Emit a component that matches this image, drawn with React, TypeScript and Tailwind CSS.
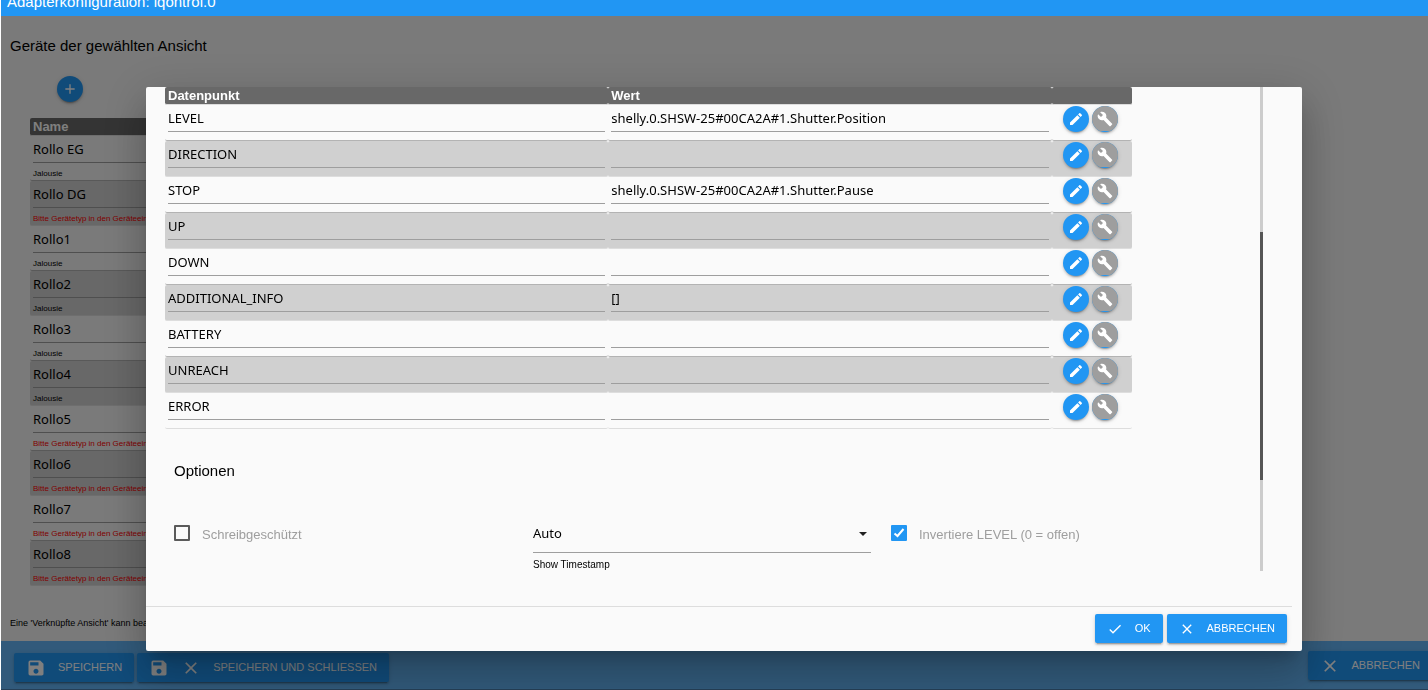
import { useState } from "react";
import type { ReactNode } from "react";
import { MdAdd, MdBuild, MdCheck, MdClose, MdEdit, MdSave } from "react-icons/md";

type Device = {
  name: string;
  type?: string;
};

type State = {
  name: string;
  value: string;
};

const devices: Device[] = [
  { name: "Rollo EG", type: "Jalousie" },
  { name: "Rollo DG" },
  { name: "Rollo1", type: "Jalousie" },
  { name: "Rollo2", type: "Jalousie" },
  { name: "Rollo3", type: "Jalousie" },
  { name: "Rollo4", type: "Jalousie" },
  { name: "Rollo5" },
  { name: "Rollo6" },
  { name: "Rollo7" },
  { name: "Rollo8" },
];

const initialStates: State[] = [
  { name: "LEVEL", value: "shelly.0.SHSW-25#00CA2A#1.Shutter.Position" },
  { name: "DIRECTION", value: "" },
  { name: "STOP", value: "shelly.0.SHSW-25#00CA2A#1.Shutter.Pause" },
  { name: "UP", value: "" },
  { name: "DOWN", value: "" },
  { name: "ADDITIONAL_INFO", value: "[]" },
  { name: "BATTERY", value: "" },
  { name: "UNREACH", value: "" },
  { name: "ERROR", value: "" },
];

const inputClass =
  "block w-full border-b border-[#9e9e9e] bg-transparent font-['Noto_Sans',sans-serif] text-[13px] text-black outline-none";

const headClass = "rounded-xs border-b border-[#ddd] bg-[#686868] px-[3px] py-0 font-bold";

// Striped rows, the line above a grey row is darker than the one below it
const stripeClass =
  "*:rounded-xs *:border-b *:border-[#ddd] *:align-top not-last:odd:*:border-[#b3b3b3] even:*:bg-[#d0d0d0]";

function ActionButton({ children }: { children: ReactNode }) {
  return (
    <button
      type="button"
      className="flex h-[29px] shrink-0 items-center gap-3 rounded-xs bg-[#2196f3] px-3 text-[11px] whitespace-nowrap text-white uppercase shadow-[0_2px_2px_rgba(0,0,0,0.14),0_1px_5px_rgba(0,0,0,0.12),0_3px_1px_-2px_rgba(0,0,0,0.2)]"
    >
      {children}
    </button>
  );
}

function DeviceTable() {
  return (
    <table className="w-full table-fixed border-separate border-spacing-0 text-left">
      <thead>
        <tr className="h-[18px] text-[13px] leading-[17px] text-white">
          <th className={headClass}>Name</th>
        </tr>
      </thead>
      <tbody>
        {devices.map((device) => (
          <tr key={device.name} className={`h-[45px] ${stripeClass}`}>
            <td className="px-[3px] py-0">
              <input aria-label="Name" defaultValue={device.name} className={`${inputClass} h-[27px]`} />
              <p
                className={
                  device.type
                    ? "pt-1 text-[8px] leading-[13px] text-black"
                    : "pt-1 text-[8px] leading-[13px] text-[#ff0000]"
                }
              >
                {device.type ?? "Bitte Gerätetyp in den Geräteeinstellungen wählen"}
              </p>
            </td>
          </tr>
        ))}
      </tbody>
    </table>
  );
}

function StateTable() {
  const [states, setStates] = useState(initialStates);

  const update = (index: number, changes: Partial<State>) => {
    setStates(states.map((state, i) => (i === index ? { ...state, ...changes } : state)));
  };

  return (
    <table className="w-[90%] table-fixed border-separate border-spacing-0 text-left">
      <thead>
        <tr className="h-[18px] text-[13px] leading-[17px] text-white">
          <th className={headClass}>Datenpunkt</th>
          <th className={headClass}>Wert</th>
          <th className={`${headClass} w-20`} />
        </tr>
      </thead>
      <tbody>
        {states.map((state, i) => (
          <tr key={i} className={`h-9 ${stripeClass}`}>
            <td className="px-[3px] py-0">
              <input
                aria-label="Datenpunkt"
                value={state.name}
                onChange={(e) => update(i, { name: e.target.value })}
                className={`${inputClass} h-[27px]`}
              />
            </td>
            <td className="px-[3px] py-0">
              <input
                aria-label="Wert"
                value={state.value}
                onChange={(e) => update(i, { value: e.target.value })}
                className={`${inputClass} h-[27px]`}
              />
            </td>
            <td className="pt-px pr-0 pb-0 pl-[11px]">
              <div className="flex gap-[3px]">
                <button
                  type="button"
                  aria-label="Bearbeiten"
                  className="flex size-[26px] items-center justify-center rounded-full bg-[#2196f3] text-white shadow-[0_2px_2px_rgba(0,0,0,0.14),0_1px_5px_rgba(0,0,0,0.12),0_3px_1px_-2px_rgba(0,0,0,0.2)]"
                >
                  <MdEdit size={16} />
                </button>
                <button
                  type="button"
                  aria-label="Einstellungen"
                  className="flex size-[26px] items-start overflow-hidden rounded-full bg-[#2196f3] text-white shadow-[0_2px_2px_rgba(0,0,0,0.14),0_1px_5px_rgba(0,0,0,0.12),0_3px_1px_-2px_rgba(0,0,0,0.2)]"
                >
                  <span className="flex h-[25px] w-full items-center justify-center bg-[#9e9e9e]">
                    <MdBuild size={16} />
                  </span>
                </button>
              </div>
            </td>
          </tr>
        ))}
      </tbody>
    </table>
  );
}

function Checkbox({ label, defaultChecked }: { label: string; defaultChecked?: boolean }) {
  return (
    <label className="flex items-start gap-3 text-[13px] leading-5 text-[#9e9e9e]">
      <span className="relative size-4">
        <input
          type="checkbox"
          defaultChecked={defaultChecked}
          className="peer block size-4 appearance-none rounded-[1px] border-2 border-[#5a5a5a] checked:border-[#2196f3] checked:bg-[#2196f3]"
        />
        <svg
          viewBox="0 0 16 16"
          className="pointer-events-none absolute inset-0 hidden size-4 fill-none stroke-white stroke-2 peer-checked:block"
        >
          <path d="M3.5 8.5 6.5 11 12.5 4" />
        </svg>
      </span>
      {label}
    </label>
  );
}

function DeviceDialog() {
  return (
    <div
      role="dialog"
      aria-label="Gerät bearbeiten"
      className="flex-1 rounded-xs bg-[#fafafa] shadow-[0_24px_38px_3px_rgba(0,0,0,0.14),0_9px_46px_8px_rgba(0,0,0,0.12),0_11px_15px_-7px_rgba(0,0,0,0.2)]"
    >
      <div className="mr-[39px] ml-[19px] flex h-[484px]">
        <div className="flex-1 overflow-hidden pr-[21px]">
          <StateTable />
          <h6 className="mt-8 px-[9px] text-[15px] leading-5 text-black">Optionen</h6>
          <div className="mt-9 grid grid-cols-3">
            <div className="px-[9px] pt-2">
              <Checkbox label="Schreibgeschützt" />
            </div>
            <div className="px-[10px]">
              <div className="relative">
                <select
                  id="timestamp"
                  className="block h-9 w-full appearance-none border-b border-[#9e9e9e] bg-transparent pb-0.5 font-['Noto_Sans',sans-serif] text-[13px] text-black outline-none"
                >
                  <option>Auto</option>
                </select>
                <svg viewBox="0 0 8 4" className="pointer-events-none absolute top-[15px] right-1 h-1 w-2 fill-[#212121]">
                  <path d="M0 0h8L4 4z" />
                </svg>
              </div>
              <label htmlFor="timestamp" className="mt-1 block text-[10px] leading-4 text-black">
                Show Timestamp
              </label>
            </div>
            <div className="px-[10px] pt-2">
              <Checkbox label="Invertiere LEVEL (0 = offen)" defaultChecked />
            </div>
          </div>
        </div>
        <div className="w-[3px] bg-[#ccc] pt-[145px]">
          <div className="h-[248px] bg-[#555]" />
        </div>
      </div>
      <div className="mt-[35px] mr-[10px] flex justify-end gap-1 border-t border-[#ddd] pt-[7px] pr-[5px] pb-2">
        <ActionButton>
          <MdCheck size={16} />
          Ok
        </ActionButton>
        <ActionButton>
          <MdClose size={16} />
          Abbrechen
        </ActionButton>
      </div>
    </div>
  );
}

export default function App() {
  return (
    <div className="flex h-screen flex-col overflow-hidden border-l border-white bg-[#f4f4f4] font-['Liberation_Sans',Arial,sans-serif]">
      <header className="relative z-20 h-4 bg-[#2196f3] px-1.5 text-[15px] leading-[4px] text-white">
        Adapterkonfiguration: iqontrol.0
      </header>

      <main className="min-h-0 flex-1 overflow-hidden px-[9px]">
        <h6 className="mt-5 text-[15px] leading-5 text-black">Geräte der gewählten Ansicht</h6>
        <button
          type="button"
          aria-label="Hinzufügen"
          className="mt-5 ml-[47px] flex size-[26px] items-center justify-center rounded-full bg-[#2196f3] text-white shadow-[0_2px_2px_rgba(0,0,0,0.14),0_1px_5px_rgba(0,0,0,0.12),0_3px_1px_-2px_rgba(0,0,0,0.2)]"
        >
          <MdAdd size={16} />
        </button>
        <div className="mt-4 mr-[150px] ml-5">
          <DeviceTable />
        </div>
        <p className="mt-7 text-[9px] leading-[18px] text-black">
          Eine 'Verknüpfte Ansicht' kann bearbeitet werden.
        </p>
      </main>

      <footer className="flex h-[49px] items-start gap-[3px] border-b border-[#4a7fae] bg-[#64b5f6] pt-3 pl-[13px]">
        <ActionButton>
          <MdSave size={20} />
          Speichern
        </ActionButton>
        <ActionButton>
          <MdSave size={20} />
          <MdClose size={20} />
          Speichern und schliessen
        </ActionButton>
        <div className="-mt-0.5 -mr-1 ml-auto">
          <ActionButton>
            <MdClose size={20} />
            Abbrechen
          </ActionButton>
        </div>
      </footer>

      <div className="fixed inset-0 left-px z-10 flex items-start bg-black/50 pt-[87px] pr-[126px] pl-[145px]">
        <DeviceDialog />
      </div>
    </div>
  );
}
